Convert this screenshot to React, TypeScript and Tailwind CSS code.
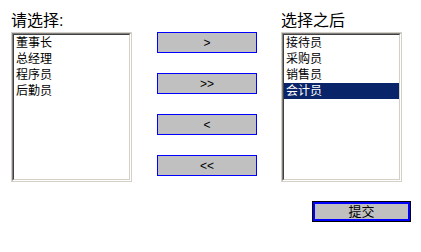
import React from "react";

const font = { fontFamily: '"Liberation Sans", "Noto Sans CJK SC", sans-serif' };

function ListBox({ items, selected }: { items: string[]; selected?: number }) {
  return (
    <div className="h-[150px] w-[121px] border border-[#d4d0c8]">
      <div className="h-full w-full border border-t-[#808080] border-l-[#808080] border-r-white border-b-white">
        <div className="h-full w-full border border-t-[#404040] border-l-[#404040] border-r-[#d4d0c8] border-b-[#d4d0c8] bg-white">
          {items.map((item, i) => (
            <div
              key={item}
              className={
                "h-4 pl-[2px] text-[12px] leading-4 " +
                (i === selected ? "bg-[#0a246a] text-white" : "text-black")
              }
            >
              {item}
            </div>
          ))}
        </div>
      </div>
    </div>
  );
}

function MoveButton({ label }: { label: string }) {
  return (
    <button
      type="button"
      className="flex h-[21px] w-[100px] items-center justify-center border border-[#0000ff] bg-[#c0c0c0] text-[12px] text-black"
    >
      {label}
    </button>
  );
}

export default function App() {
  return (
    <div className="h-[252px] w-[421px] bg-white text-black" style={font}>
      <div className="flex pl-[11px] pt-[11px]">
        <div className="flex flex-col">
          <div className="h-[21px] text-[16px] leading-[20px]">请选择:</div>
          <ListBox items={["董事长", "总经理", "程序员", "后勤员"]} />
        </div>
        <div className="ml-[25px] mt-[21px] flex flex-col gap-5">
          <MoveButton label=">" />
          <MoveButton label=">>" />
          <MoveButton label="<" />
          <MoveButton label="<<" />
        </div>
        <div className="ml-[24px] flex flex-col">
          <div className="h-[21px] text-[16px] leading-[20px]">选择之后</div>
          <ListBox items={["接待员", "采购员", "销售员", "会计员"]} selected={3} />
        </div>
      </div>
      <div className="flex justify-end pr-[10px] pt-[19px]">
        <button
          type="button"
          className="flex h-[21px] w-[99px] items-center justify-center border border-black bg-[#c0c0c0] text-[13px] text-black shadow-[inset_0_0_0_2px_#0000ff]"
        >
          提交
        </button>
      </div>
    </div>
  );
}
